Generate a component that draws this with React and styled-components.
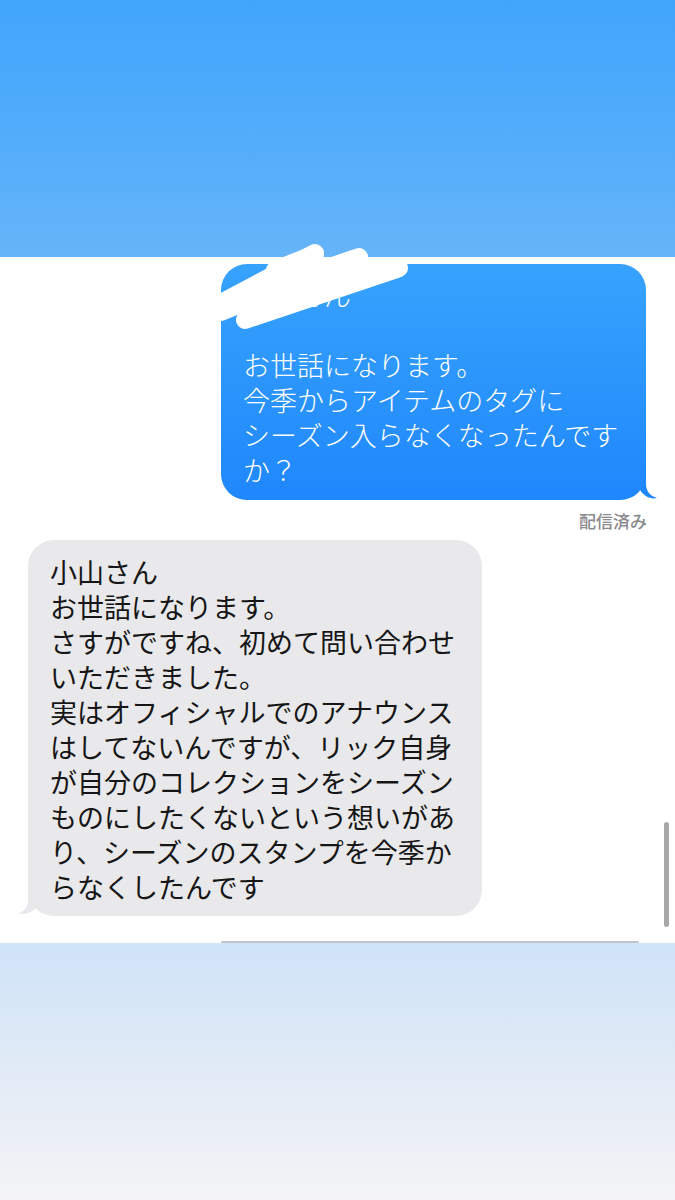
import React from "react";
import styled, { createGlobalStyle } from "styled-components";

const GlobalStyle = createGlobalStyle`
  html, body {
    margin: 0;
    padding: 0;
    background: #ffffff;
  }
  #root {
    width: 675px;
    height: 1200px;
  }
`;

const Screen = styled.div`
  width: 675px;
  height: 1200px;
  display: flex;
  flex-direction: column;
  overflow: hidden;
  font-family: "Noto Sans CJK JP", "Noto Sans", sans-serif;
`;

const Header = styled.div`
  height: 257px;
  flex-shrink: 0;
  background: linear-gradient(180deg, #41a5fc 0%, #51acfb 50%, #66b4f9 100%);
`;

const Thread = styled.div`
  position: relative;
  height: 686px;
  flex-shrink: 0;
  background: #ffffff;
  padding-top: 7px;
  box-sizing: border-box;
  display: flex;
  flex-direction: column;
`;

const Row = styled.div`
  display: flex;
  justify-content: ${(p) => (p.$sent ? "flex-end" : "flex-start")};
  padding: ${(p) => (p.$sent ? "0 29px 0 0" : "0 0 0 28px")};
`;

const Bubble = styled.div`
  position: relative;
  width: ${(p) => p.$width}px;
  box-sizing: border-box;
  border-radius: 26px;
  padding: ${(p) => (p.$sent ? "13px 20px 13px 22px" : "14px 20px 12px 22px")};
  font-size: 27px;
  line-height: 35px;
  font-weight: ${(p) => (p.$sent ? 300 : 400)};
  white-space: pre-wrap;
  color: ${(p) => (p.$sent ? "#ffffff" : "#161616")};
  background: ${(p) =>
    p.$sent ? "linear-gradient(180deg, #37a3fd 0%, #2b95fc 50%, #1f87fc 100%)" : "#e9e9eb"};
`;

const Tail = styled.svg`
  position: absolute;
  bottom: 0;
  width: 40px;
  height: 32px;
  ${(p) => (p.$sent ? "right: -14px;" : "left: -10px;")}
`;

const Scribble = styled.svg`
  position: absolute;
  left: -6px;
  top: -24px;
  width: 200px;
  height: 100px;
`;

const Status = styled.div`
  align-self: flex-end;
  margin: 10px 28px 8px 0;
  font-size: 17px;
  line-height: 22px;
  font-weight: 500;
  color: #8a8a8e;
`;

const NextBubble = styled.div`
  margin: 25px 0 0 221px;
  width: 418px;
  height: 60px;
  border-radius: 20px;
  background: #c0c4ca;
`;

const ScrollBar = styled.div`
  position: absolute;
  right: 6px;
  top: 565px;
  width: 5px;
  height: 105px;
  border-radius: 3px;
  background: #a8a8a8;
`;

const Footer = styled.div`
  position: relative;
  flex: 1;
  background: linear-gradient(180deg, #cfe3f8 0%, #dde9f6 40%, #e9eef6 70%, #f4f4f6 100%);
`;

const SentTail = () => (
  <Tail $sent viewBox="0 0 40 32">
    <path d="M26 3 L26 16 C26 23 30 28 37 30 C31 31.5 24 28.5 20 22 Z" fill="#1f87fc" />
  </Tail>
);

const ReceivedTail = () => (
  <Tail viewBox="0 0 40 32">
    <path d="M10 3 L10 16 C10 23 6 28 0 29.5 C6 31 14 28.5 19 23 Z" fill="#e9e9eb" />
  </Tail>
);

// white marker strokes hiding the name
const Redaction = () => (
  <Scribble viewBox="0 0 200 100">
    <g stroke="#ffffff" strokeWidth="18" strokeLinecap="round" strokeLinejoin="round" fill="none">
      <path d="M8 62 L100 13" />
      <path d="M30 56 L144 17" />
      <path d="M30 80 L182 29" />
      <path d="M70 38 L184 28" />
      <path d="M6 72 L70 46" />
      <path d="M40 60 L125 34" />
      <path d="M60 30 L100 14" />
    </g>
  </Scribble>
);

const sentText = "〇〇さん\n\nお世話になります。\n今季からアイテムのタグに\nシーズン入らなくなったんですか？";

const receivedText =
  "小山さん\nお世話になります。\nさすがですね、初めて問い合わせいただきました。\n実はオフィシャルでのアナウンスはしてないんですが、リック自身が自分のコレクションをシーズンものにしたくないという想いがあり、シーズンのスタンプを今季からなくしたんです";

const App = () => {
  return (
    <>
      <GlobalStyle />
      <Screen>
        <Header />
        <Thread>
          <Row $sent>
            <Bubble $sent $width={425}>
              {sentText}
              <SentTail />
              <Redaction />
            </Bubble>
          </Row>
          <Status>配信済み</Status>
          <Row>
            <Bubble $width={454}>
              {receivedText}
              <ReceivedTail />
            </Bubble>
          </Row>
          <NextBubble />
          <ScrollBar />
        </Thread>
        <Footer />
      </Screen>
    </>
  );
};

export default App;
